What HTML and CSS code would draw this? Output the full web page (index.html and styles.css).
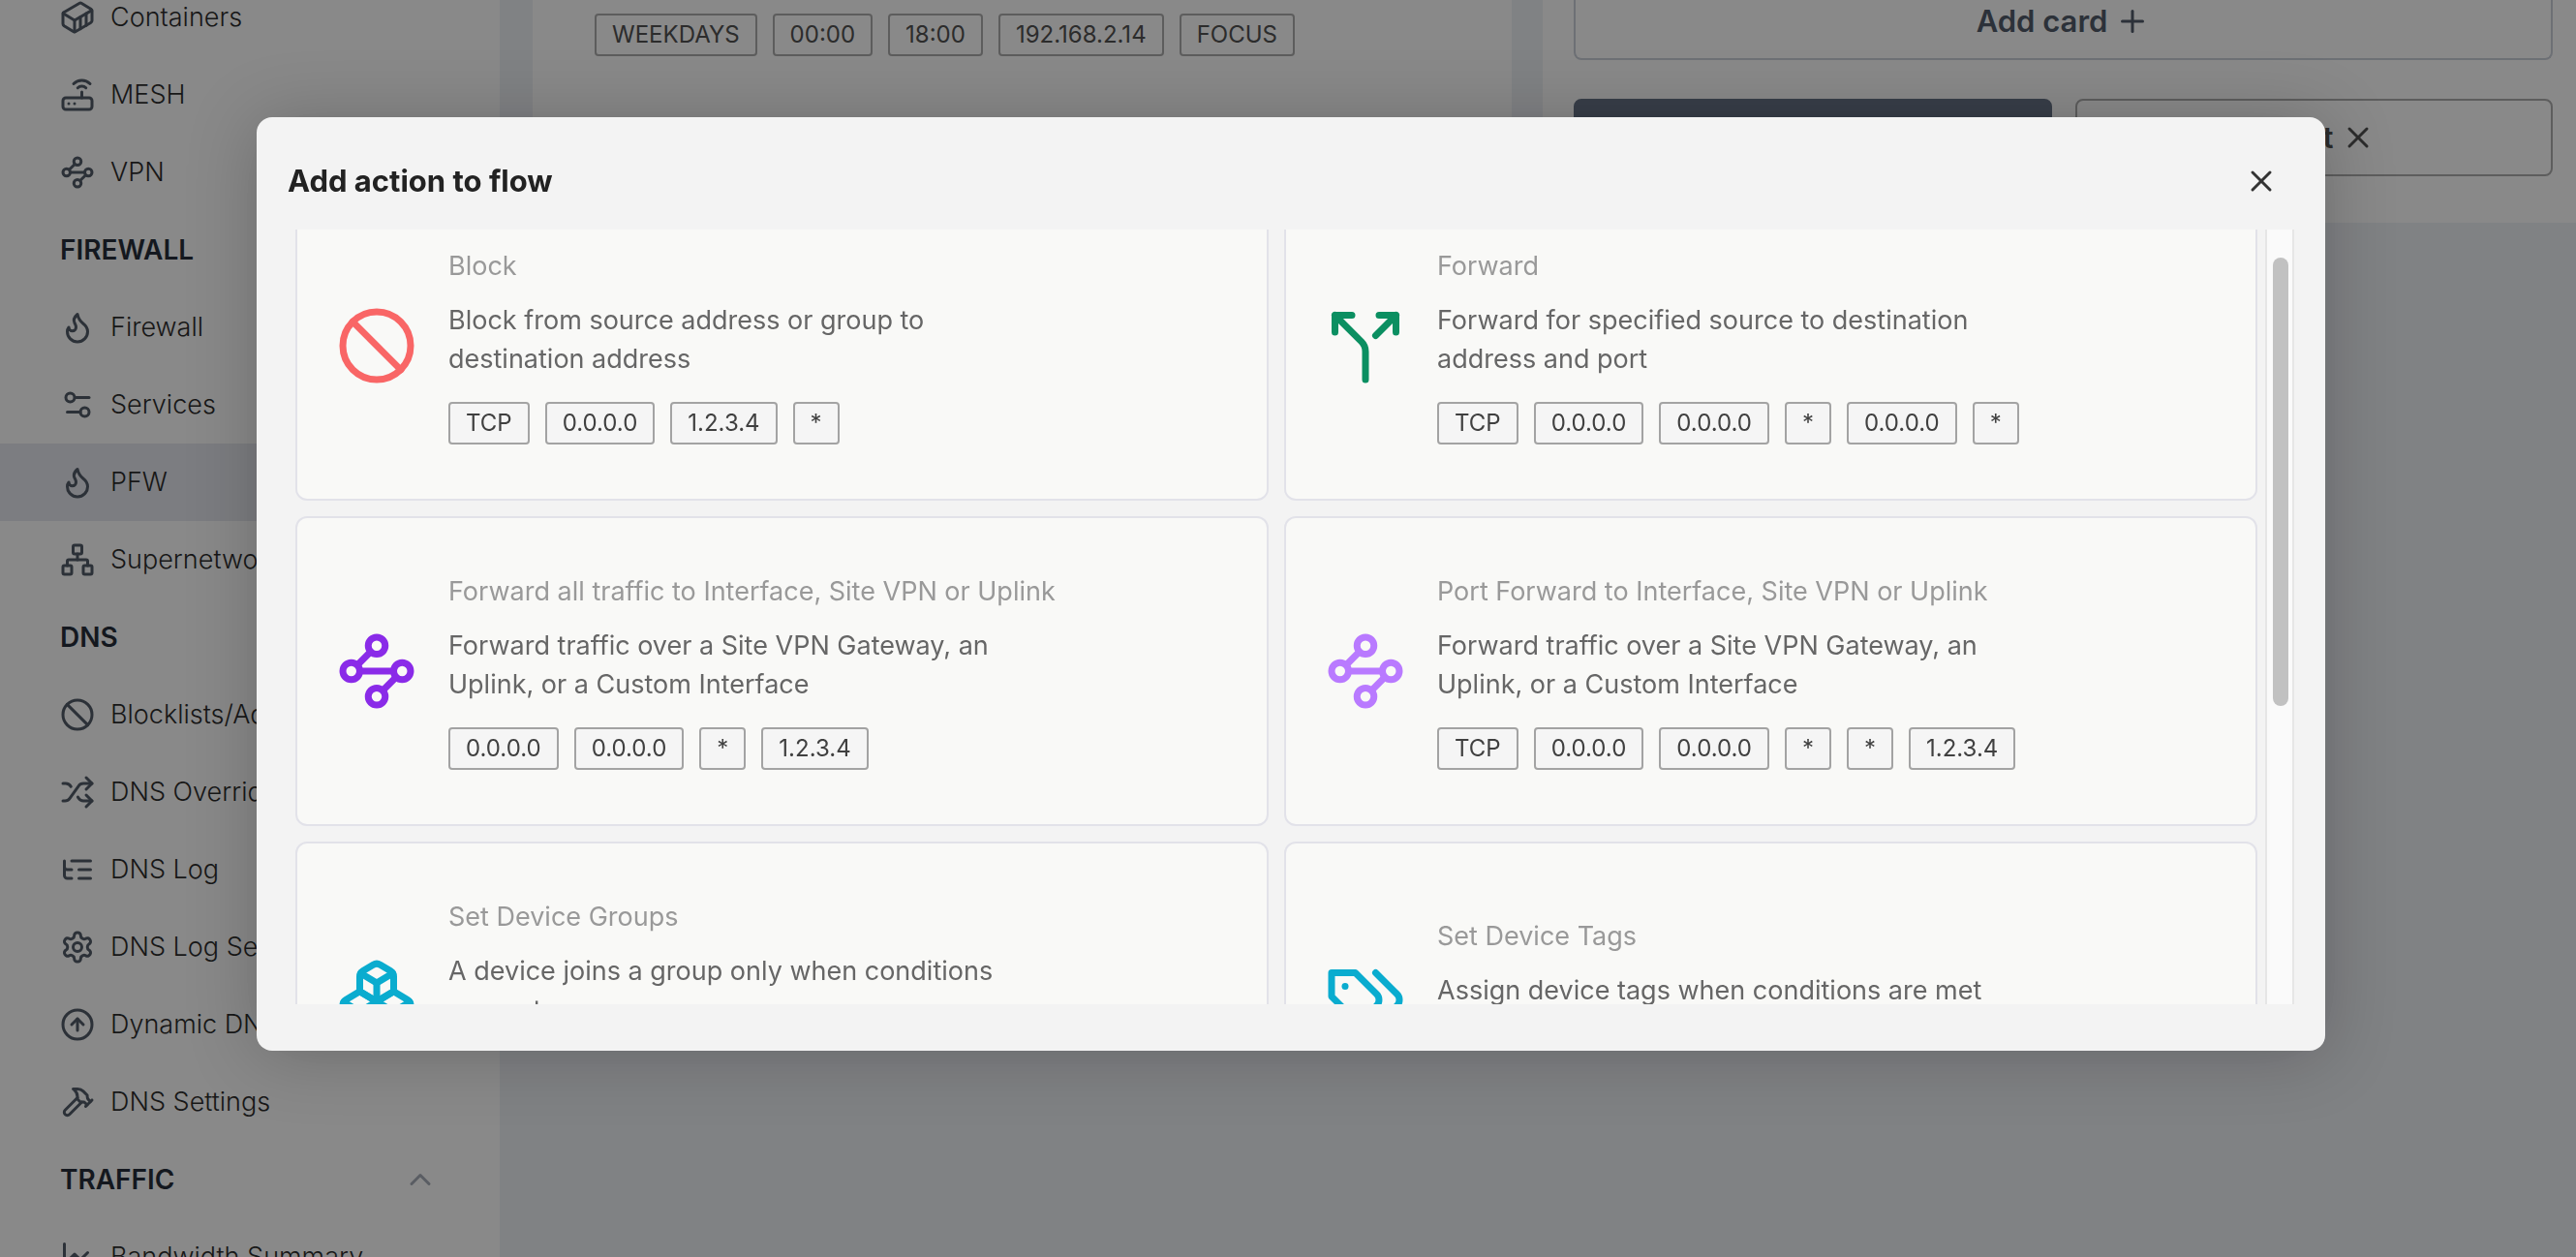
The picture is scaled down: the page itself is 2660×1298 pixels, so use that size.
FILE: index.html
```html
<!DOCTYPE html>
<html lang="en">
<head>
<meta charset="utf-8">
<title>Add action to flow</title>
<link rel="stylesheet" href="styles.css">
</head>
<body>
<svg class="sprite" aria-hidden="true">
  <symbol id="i-container" viewBox="0 0 24 24"><path d="M22 7.7c0-.6-.4-1.2-.8-1.5l-6.3-3.9a1.72 1.72 0 0 0-1.7 0l-10.3 6c-.5.2-.9.8-.9 1.4v6.6c0 .5.4 1.2.8 1.5l6.3 3.9a1.72 1.72 0 0 0 1.7 0l10.3-6c.5-.3.9-1 .9-1.5Z"/><path d="M10 21.9V14L2.1 9.1"/><path d="m10 14 11.9-6.9"/><path d="M14 19.8v-8.1"/><path d="M18 17.5V9.4"/></symbol>
  <symbol id="i-router" viewBox="0 0 24 24"><rect x="2" y="14" width="20" height="8" rx="2"/><path d="M6.01 18H6"/><path d="M10.01 18H10"/><path d="M15 10v4"/><path d="M17.84 7.17a4 4 0 0 0-5.66 0"/><path d="M20.66 4.34a8 8 0 0 0-11.31 0"/></symbol>
  <symbol id="i-waypoints" viewBox="0 0 24 24"><circle cx="12" cy="4.5" r="2.5"/><path d="m10.2 6.3-3.9 3.9"/><circle cx="4.5" cy="12" r="2.5"/><path d="M7 12h10"/><circle cx="19.5" cy="12" r="2.5"/><path d="m13.8 17.7 3.9-3.9"/><circle cx="12" cy="19.5" r="2.5"/></symbol>
  <symbol id="i-flame" viewBox="0 0 24 24"><path d="M8.5 14.5A2.5 2.5 0 0 0 11 12c0-1.38-.5-2-1-3-1.072-2.143-.224-4.054 2-6 .5 2.5 2 4.9 4 6.5 2 1.6 3 3.5 3 5.5a7 7 0 1 1-14 0c0-1.153.433-2.294 1-3a2.5 2.5 0 0 0 2.5 2.5z"/></symbol>
  <symbol id="i-sliders" viewBox="0 0 24 24"><path d="M20 7h-9"/><path d="M14 17H5"/><circle cx="17" cy="17" r="3"/><circle cx="7" cy="7" r="3"/></symbol>
  <symbol id="i-network" viewBox="0 0 24 24"><rect x="16" y="16" width="6" height="6" rx="1"/><rect x="2" y="16" width="6" height="6" rx="1"/><rect x="9" y="2" width="6" height="6" rx="1"/><path d="M5 16v-3a1 1 0 0 1 1-1h12a1 1 0 0 1 1 1v3"/><path d="M12 12V8"/></symbol>
  <symbol id="i-ban" viewBox="0 0 24 24"><circle cx="12" cy="12" r="10"/><path d="m4.9 4.9 14.2 14.2"/></symbol>
  <symbol id="i-shuffle" viewBox="0 0 24 24"><path d="M2 18h1.4c1.3 0 2.5-.6 3.3-1.7l6.1-8.6c.7-1.1 2-1.7 3.3-1.7H22"/><path d="m18 2 4 4-4 4"/><path d="M2 6h1.9c1.5 0 2.9.9 3.6 2.2"/><path d="M22 18h-5.9c-1.3 0-2.6-.7-3.3-1.8l-.5-.8"/><path d="m18 14 4 4-4 4"/></symbol>
  <symbol id="i-list-tree" viewBox="0 0 24 24"><path d="M21 12h-8"/><path d="M21 6H8"/><path d="M21 18h-8"/><path d="M3 6v4c0 1.1.9 2 2 2h3"/><path d="M3 10v6c0 1.1.9 2 2 2h3"/></symbol>
  <symbol id="i-settings" viewBox="0 0 24 24"><path d="M12.22 2h-.44a2 2 0 0 0-2 2v.18a2 2 0 0 1-1 1.73l-.43.25a2 2 0 0 1-2 0l-.15-.08a2 2 0 0 0-2.73.73l-.22.38a2 2 0 0 0 .73 2.73l.15.1a2 2 0 0 1 1 1.72v.51a2 2 0 0 1-1 1.74l-.15.09a2 2 0 0 0-.73 2.73l.22.38a2 2 0 0 0 2.73.73l.15-.08a2 2 0 0 1 2 0l.43.25a2 2 0 0 1 1 1.73V20a2 2 0 0 0 2 2h.44a2 2 0 0 0 2-2v-.18a2 2 0 0 1 1-1.73l.43-.25a2 2 0 0 1 2 0l.15.08a2 2 0 0 0 2.73-.73l.22-.39a2 2 0 0 0-.73-2.73l-.15-.08a2 2 0 0 1-1-1.74v-.5a2 2 0 0 1 1-1.74l.15-.09a2 2 0 0 0 .73-2.73l-.22-.38a2 2 0 0 0-2.73-.73l-.15.08a2 2 0 0 1-2 0l-.43-.25a2 2 0 0 1-1-1.73V4a2 2 0 0 0-2-2z"/><circle cx="12" cy="12" r="3"/></symbol>
  <symbol id="i-arrow-up" viewBox="0 0 24 24"><circle cx="12" cy="12" r="10"/><path d="m16 12-4-4-4 4"/><path d="M12 16V8"/></symbol>
  <symbol id="i-hammer" viewBox="0 0 24 24"><path d="m15 12-8.5 8.5c-.83.83-2.17.83-3 0a2.12 2.12 0 0 1 0-3L12 9"/><path d="M17.64 15 22 10.64"/><path d="m20.91 11.7-1.25-1.25c-.6-.6-.93-1.4-.93-2.25v-.86L16.01 4.6a5.56 5.56 0 0 0-3.94-1.64H9l.92.82A6.18 6.18 0 0 1 12 8.4v1.56l2 2h2.47l2.26 1.91"/></symbol>
  <symbol id="i-chart" viewBox="0 0 24 24"><path d="M3 3v18h18"/><path d="m19 9-5 5-4-4-3 3"/></symbol>
  <symbol id="i-chevron" viewBox="0 0 24 24"><path d="m18 15-6-6-6 6"/></symbol>
  <symbol id="i-plus" viewBox="0 0 24 24"><path d="M5 12h14"/><path d="M12 5v14"/></symbol>
  <symbol id="i-x" viewBox="0 0 24 24"><path d="M18 6 6 18"/><path d="m6 6 12 12"/></symbol>
  <symbol id="i-split" viewBox="0 0 24 24"><path d="M16 3h5v5"/><path d="M8 3H3v5"/><path d="M12 22v-8.3a4 4 0 0 0-1.172-2.872L3 3"/><path d="m15 9 6-6"/></symbol>
  <symbol id="i-boxes" viewBox="0 0 24 24"><path d="M2.97 12.92A2 2 0 0 0 2 14.63v3.24a2 2 0 0 0 .97 1.71l3 1.8a2 2 0 0 0 2.06 0L12 19v-5.5l-5-3-4.03 2.42Z"/><path d="m7 16.5-4.74-2.85"/><path d="m7 16.5 5-3"/><path d="M7 16.5v5.17"/><path d="M12 13.5V19l3.97 2.38a2 2 0 0 0 2.06 0l3-1.8a2 2 0 0 0 .97-1.71v-3.24a2 2 0 0 0-.97-1.71L17 10.5l-5 3Z"/><path d="m17 16.5-5-3"/><path d="m17 16.5 4.74-2.85"/><path d="M17 16.5v5.17"/><path d="M7.97 4.42A2 2 0 0 0 7 6.13v4.37l5 3 5-3V6.13a2 2 0 0 0-.97-1.71l-3-1.8a2 2 0 0 0-2.06 0l-3 1.8Z"/><path d="M12 8 7.26 5.15"/><path d="m12 8 4.74-2.85"/><path d="M12 13.5V8"/></symbol>
  <symbol id="i-tags" viewBox="0 0 24 24"><path d="M9 5H2v7l6.29 6.29c.94.94 2.48.94 3.42 0l3.58-3.58c.94-.94.94-2.48 0-3.42L9 5Z"/><path d="M6 9.01V9"/><path d="m15 5 6.3 6.3a2.4 2.4 0 0 1 0 3.4L17 19"/></symbol>
</svg>

<div class="app">
  <nav class="sidebar" aria-label="Main">
    <a class="nav-item" href="#"><svg class="icon"><use href="#i-container"/></svg>Containers</a>
    <a class="nav-item" href="#"><svg class="icon"><use href="#i-router"/></svg>MESH</a>
    <a class="nav-item" href="#"><svg class="icon"><use href="#i-waypoints"/></svg>VPN</a>
    <h2 class="nav-heading">FIREWALL</h2>
    <a class="nav-item" href="#"><svg class="icon"><use href="#i-flame"/></svg>Firewall</a>
    <a class="nav-item" href="#"><svg class="icon"><use href="#i-sliders"/></svg>Services</a>
    <a class="nav-item active" href="#"><svg class="icon"><use href="#i-flame"/></svg>PFW</a>
    <a class="nav-item" href="#"><svg class="icon"><use href="#i-network"/></svg>Supernetworks</a>
    <h2 class="nav-heading">DNS</h2>
    <a class="nav-item" href="#"><svg class="icon"><use href="#i-ban"/></svg>Blocklists/Ad-Block</a>
    <a class="nav-item" href="#"><svg class="icon"><use href="#i-shuffle"/></svg>DNS Overrides</a>
    <a class="nav-item" href="#"><svg class="icon"><use href="#i-list-tree"/></svg>DNS Log</a>
    <a class="nav-item" href="#"><svg class="icon"><use href="#i-settings"/></svg>DNS Log Settings</a>
    <a class="nav-item" href="#"><svg class="icon"><use href="#i-arrow-up"/></svg>Dynamic DNS</a>
    <a class="nav-item" href="#"><svg class="icon"><use href="#i-hammer"/></svg>DNS Settings</a>
    <h2 class="nav-heading">TRAFFIC<svg class="icon chevron"><use href="#i-chevron"/></svg></h2>
    <a class="nav-item" href="#"><svg class="icon"><use href="#i-chart"/></svg>Bandwidth Summary</a>
  </nav>

  <main class="main">
    <section class="flow">
      <ul class="tags">
        <li class="tag">WEEKDAYS</li><li class="tag">00:00</li><li class="tag">18:00</li><li class="tag">192.168.2.14</li><li class="tag">FOCUS</li>
      </ul>
    </section>
    <section class="editor">
      <button class="add-card" type="button">Add card<svg class="icon"><use href="#i-plus"/></svg></button>
      <div class="editor-actions">
        <button class="btn primary" type="button" aria-label="Save"></button>
        <button class="btn" type="button">Reset<svg class="icon"><use href="#i-x"/></svg></button>
      </div>
    </section>
  </main>
</div>

<div class="overlay">
  <div class="modal" role="dialog" aria-modal="true" aria-labelledby="modal-title">
    <header class="modal-header">
      <h1 class="modal-title" id="modal-title">Add action to flow</h1>
      <button class="close" type="button" aria-label="Close"><svg class="icon"><use href="#i-x"/></svg></button>
    </header>
    <div class="modal-body">
      <div class="card-list" id="card-list">
        <article class="card">
          <svg class="card-icon red"><use href="#i-ban"/></svg>
          <div class="card-text">
            <h3 class="card-title">Block</h3>
            <p class="card-desc">Block from source address or group to destination address</p>
            <ul class="tags"><li class="tag">TCP</li><li class="tag">0.0.0.0</li><li class="tag">1.2.3.4</li><li class="tag">*</li></ul>
          </div>
        </article>
        <article class="card">
          <svg class="card-icon green"><use href="#i-split"/></svg>
          <div class="card-text">
            <h3 class="card-title">Forward</h3>
            <p class="card-desc">Forward for specified source to destination address and port</p>
            <ul class="tags"><li class="tag">TCP</li><li class="tag">0.0.0.0</li><li class="tag">0.0.0.0</li><li class="tag">*</li><li class="tag">0.0.0.0</li><li class="tag">*</li></ul>
          </div>
        </article>
        <article class="card">
          <svg class="card-icon violet"><use href="#i-waypoints"/></svg>
          <div class="card-text">
            <h3 class="card-title">Forward all traffic to Interface, Site VPN or Uplink</h3>
            <p class="card-desc">Forward traffic over a Site VPN Gateway, an Uplink, or a Custom Interface</p>
            <ul class="tags"><li class="tag">0.0.0.0</li><li class="tag">0.0.0.0</li><li class="tag">*</li><li class="tag">1.2.3.4</li></ul>
          </div>
        </article>
        <article class="card">
          <svg class="card-icon lilac"><use href="#i-waypoints"/></svg>
          <div class="card-text">
            <h3 class="card-title">Port Forward to Interface, Site VPN or Uplink</h3>
            <p class="card-desc">Forward traffic over a Site VPN Gateway, an Uplink, or a Custom Interface</p>
            <ul class="tags"><li class="tag">TCP</li><li class="tag">0.0.0.0</li><li class="tag">0.0.0.0</li><li class="tag">*</li><li class="tag">*</li><li class="tag">1.2.3.4</li></ul>
          </div>
        </article>
        <article class="card">
          <svg class="card-icon cyan"><use href="#i-boxes"/></svg>
          <div class="card-text">
            <h3 class="card-title">Set Device Groups</h3>
            <p class="card-desc">A device joins a group only when conditions are met</p>
            <ul class="tags"><li class="tag">Groups</li></ul>
          </div>
        </article>
        <article class="card">
          <svg class="card-icon cyan"><use href="#i-tags"/></svg>
          <div class="card-text">
            <h3 class="card-title">Set Device Tags</h3>
            <p class="card-desc">Assign device tags when conditions are met</p>
            <ul class="tags"><li class="tag">Tags</li></ul>
          </div>
        </article>
      </div>
      <div class="scrollbar" aria-hidden="true"><div class="thumb"></div></div>
    </div>
  </div>
</div>
<script src="script.js"></script>
</body>
</html>
```
FILE: styles.css
```css
* { box-sizing: border-box; }

body {
  margin: 0;
  height: 100vh;
  overflow: hidden;
  background: #e9ecf1;
  color: #171717;
  font-family: Inter, "Liberation Sans", sans-serif;
  font-size: 27px;
  line-height: 40px;
}

h1, h2, h3, p, ul { margin: 0; padding: 0; }

button {
  font: inherit;
  color: inherit;
  background: none;
  cursor: pointer;
}

.sprite { display: none; }

.icon {
  width: 36px;
  height: 36px;
  flex: none;
  fill: none;
  stroke: currentColor;
  stroke-width: 2;
  stroke-linecap: round;
  stroke-linejoin: round;
}

/* Page */
.app {
  display: flex;
  height: 100vh;
  overflow: hidden;
}

.sidebar {
  width: 516px;
  flex: none;
  margin-top: -22px;
  background: #fafafa;
}

.nav-item,
.nav-heading {
  display: flex;
  align-items: center;
  gap: 16px;
  height: 80px;
  padding: 0 64px 0 62px;
  white-space: nowrap;
}

.nav-item {
  color: #171717;
  font-weight: 300;
  text-decoration: none;
}

.nav-item .icon { color: #404b58; }
.nav-item.active { background: #e1e3ea; }

.nav-heading {
  justify-content: space-between;
  color: #111827;
  font-size: 28px;
  font-weight: 600;
}

.chevron { color: #9ca3af; }

.main {
  display: grid;
  grid-template-columns: 1011fr 1067fr;
  gap: 32px;
  align-items: start;
  flex: 1;
  min-width: 0;
  padding-left: 34px;
}

.flow {
  height: 230px;
  padding: 14px 64px;
  background: #fafafa;
}

.editor {
  padding: 0 24px 48px 32px;
  background: #fafafa;
}

.add-card {
  display: flex;
  align-items: center;
  justify-content: center;
  gap: 8px;
  width: 100%;
  height: 62px;
  padding: 0 0 16px;
  border: 2px solid #c3c8d2;
  border-top: 0;
  border-radius: 0 0 8px 8px;
  color: #404b5a;
  font-size: 31px;
  font-weight: 600;
}

.editor-actions {
  display: grid;
  grid-template-columns: 1fr 1fr;
  gap: 24px;
  margin-top: 40px;
}

.btn {
  display: flex;
  align-items: center;
  justify-content: center;
  gap: 8px;
  height: 80px;
  border: 2px solid #a3a3a3;
  border-radius: 8px;
  color: #404040;
  font-size: 31px;
  font-weight: 600;
}

.btn.primary {
  border-color: #58657a;
  background: #58657a;
}

.tags {
  display: flex;
  gap: 16px;
  list-style: none;
}

.tag {
  height: 44px;
  padding: 0 16px;
  border: 2px solid #a3a3a3;
  border-radius: 4px;
  color: #404040;
  font-size: 24px;
  line-height: 40px;
}

/* Dialog */
.overlay {
  position: fixed;
  inset: 0;
  background: rgba(23, 23, 23, 0.5);
}

.modal {
  margin: 121px 259px 0 265px;
  padding: 32px 32px 48px;
  border-radius: 16px;
  background: #f3f3f3;
  box-shadow: 0 4px 72px rgba(0, 0, 0, 0.22);
}

.modal-header {
  display: flex;
  align-items: center;
  justify-content: space-between;
  height: 68px;
  margin-bottom: 16px;
}

.modal-title {
  color: #222;
  font-size: 31px;
  font-weight: 700;
}

.close {
  display: flex;
  padding: 16px;
  border: 0;
  color: #333;
}

.modal-body {
  display: flex;
  height: 800px;
}

.card-list {
  display: grid;
  grid-template-columns: 1fr 1fr;
  grid-auto-rows: 320px;
  gap: 16px;
  flex: 1;
  padding: 8px;
  overflow-y: scroll;
  scrollbar-width: none;
}

.card {
  display: flex;
  align-items: center;
  gap: 32px;
  padding: 0 40px;
  border: 2px solid #e2e2e9;
  border-radius: 12px;
  background: #f9f9f7;
}

.card-icon {
  width: 84px;
  height: 84px;
  flex: none;
  fill: none;
  stroke: currentColor;
  stroke-width: 2;
  stroke-linecap: round;
  stroke-linejoin: round;
}

.red { color: #f96666; }
.green { color: #0b8f61; }
.violet { color: #8a2be8; }
.lilac { color: #b97aff; }
.cyan { color: #0aaccf; }

.card-title {
  color: #999;
  font-size: 27px;
  font-weight: 400;
}

.card-desc {
  max-width: 580px;
  margin: 16px 0 24px;
  color: #666;
}

.card .tag { background: #f5f5f5; }

.scrollbar {
  width: 30px;
  padding: 29px 4px 0 6px;
  border: solid #e6e6e6;
  border-width: 0 2px;
  background: #fafafa;
}

.thumb {
  height: 463px;
  border-radius: 8px;
  background: #c1c1c1;
}
```
FILE: script.js
```js
document.getElementById("card-list").scrollTop = 48;
```
